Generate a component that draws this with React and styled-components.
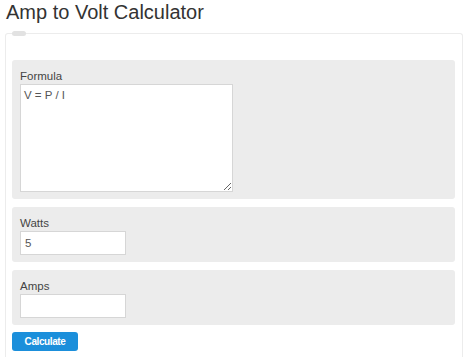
import styled, { createGlobalStyle } from "styled-components"

const Global = createGlobalStyle`
  body {
    margin: 0;
    background: #fff;
    font-family: "Liberation Sans", Arial, sans-serif;
  }
`

const Page = styled.div`
  padding: 0 11px 0 5px;
`

const Title = styled.h1`
  margin: 0;
  padding: 0 1px;
  font-size: 20px;
  line-height: 24px;
  font-weight: normal;
  color: #333;
`

const Card = styled.div`
  position: relative;
  box-sizing: border-box;
  margin-top: 9px;
  border: 1px solid #ececec;
  border-bottom: none;
  border-radius: 3px 3px 0 0;
  padding: 26px 7px 0 6px;
  min-height: 324px;
`

const Tab = styled.span`
  position: absolute;
  top: -3px;
  left: 6px;
  width: 14px;
  height: 5px;
  border-radius: 3px;
  background: #e2e2e2;
`

const Section = styled.div`
  background: #ececec;
  border-radius: 3px;
  padding: 8px 8px 7px;
  margin-bottom: 8px;
`

const Label = styled.label`
  display: block;
  font-size: 11.5px;
  line-height: 16px;
  color: #444;
`

const Area = styled.textarea`
  display: block;
  box-sizing: border-box;
  width: 213px;
  height: 108px;
  margin: 0;
  padding: 4px 3px;
  border: 1px solid #d6d6d6;
  background: #fff;
  font-family: "Liberation Sans", Arial, sans-serif;
  font-size: 11.5px;
  color: #555;
  outline: none;
`

const Field = styled.input`
  display: block;
  box-sizing: border-box;
  width: 106px;
  height: 24px;
  margin: 0;
  padding: 0 4px;
  border: 1px solid #d6d6d6;
  background: #fff;
  font-family: "Liberation Sans", Arial, sans-serif;
  font-size: 11.5px;
  color: #555;
  outline: none;
`

const Button = styled.button`
  display: block;
  width: 66px;
  height: 19px;
  margin-top: -1px;
  padding: 0;
  border: none;
  border-radius: 3px;
  background: #1b8fdb;
  color: #fff;
  font-family: "Liberation Sans", Arial, sans-serif;
  font-size: 10px;
  font-weight: bold;
  letter-spacing: -0.4px;
`

export default function App() {
  return (
    <Page>
      <Global />
      <Title>Amp to Volt Calculator</Title>
      <Card>
        <Tab />
        <Section>
          <Label>Formula</Label>
          <Area defaultValue="V = P / I" />
        </Section>
        <Section>
          <Label>Watts</Label>
          <Field defaultValue="5" />
        </Section>
        <Section>
          <Label>Amps</Label>
          <Field />
        </Section>
        <Button>Calculate</Button>
      </Card>
    </Page>
  )
}
